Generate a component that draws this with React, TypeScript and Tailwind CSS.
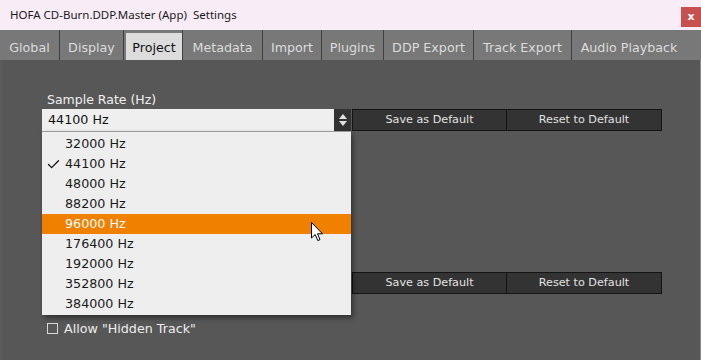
import { Check } from "lucide-react";

const TABS = [
  { label: "Global", w: "w-[60px]" },
  { label: "Display", w: "w-[64px]" },
  { label: "Project", w: "w-[59px]", active: true },
  { label: "Metadata", w: "w-[80px]" },
  { label: "Import", w: "w-[59px]" },
  { label: "Plugins", w: "w-[62px]" },
  { label: "DDP Export", w: "w-[90px]" },
  { label: "Track Export", w: "w-[98px]" },
  { label: "Audio Playback", w: "w-[114px]", last: true },
];

const RATES = ["32000", "44100", "48000", "88200", "96000", "176400", "192000", "352800", "384000"];

function ButtonPair() {
  return (
    <div className="flex ml-[1px]">
      <button className="w-[155px] h-[22px] bg-[#333333] border border-[#141414] text-[#e2e2e2] text-[11.2px] leading-none">
        Save as Default
      </button>
      <button className="w-[155px] h-[22px] bg-[#333333] border border-l-0 border-[#141414] text-[#e2e2e2] text-[11.2px] leading-none">
        Reset to Default
      </button>
    </div>
  );
}

export default function App() {
  return (
    <div
      className="w-[701px] h-[360px] flex flex-col overflow-hidden select-none"
      style={{ fontFamily: '"DejaVu Sans", Verdana, sans-serif' }}
    >
      {/* title bar */}
      <div className="h-[30px] shrink-0 bg-[#f8ecf7] flex items-start justify-between">
        <span
          className="pl-[10px] pt-[6px] text-[11.5px] text-[#1a1a1a]"
          style={{ fontFamily: '"Noto Sans", "Open Sans", sans-serif' }}
        >
          HOFA CD-Burn.DDP.Master (App)&nbsp;&nbsp;Settings
        </span>
        <div className="mt-[7px] w-[20px] h-[20px] bg-[#c84f4f] flex items-center justify-center text-white text-[11px] font-bold leading-none pb-[2px]">
          x
        </div>
      </div>

      {/* tabs */}
      <div className="h-[30px] shrink-0 bg-[#787878] flex">
        {TABS.map((t) => (
          <div
            key={t.label}
            className={`${t.w} h-full flex ${t.last ? "" : "border-r border-[#3f3f3f]"}`}
          >
            <div
              className={`flex-1 mt-[3px] pt-[2px] flex items-center justify-center text-[12.7px] ${
                t.active ? "bg-[#dcdcdc] text-[#141414] ml-[2px]" : "text-[#dcdcdc]"
              }`}
            >
              {t.label}
            </div>
          </div>
        ))}
      </div>

      {/* content */}
      <div className="flex-1 relative bg-[#575757] border-l-2 border-[#5c5c5c] border-r border-r-[#8c8c8c]">
        <div className="pl-[40px] pt-[32px] flex flex-col">
          <div className="pl-[5px] h-[17px] text-[12.5px] text-[#f0f0f0] leading-[15px]">Sample Rate (Hz)</div>
          <div className="flex">
            <div className="w-[309px] h-[22px] bg-[#efefef] flex items-center">
              <span className="flex-1 pl-[6px] text-[12.7px] text-[#111]">44100 Hz</span>
              <div className="w-[17px] h-full bg-[#323232] flex flex-col items-center justify-center gap-[2px]">
                <svg width="8" height="5" viewBox="0 0 8 5">
                  <path d="M4 0 L8 5 L0 5 Z" fill="#e0e0e0" />
                </svg>
                <svg width="8" height="5" viewBox="0 0 8 5">
                  <path d="M0 0 L8 0 L4 5 Z" fill="#e0e0e0" />
                </svg>
              </div>
            </div>
            <ButtonPair />
          </div>

          <div className="flex mt-[141px]">
            <div className="w-[309px] h-[22px]" />
            <ButtonPair />
          </div>

          <div className="flex items-center mt-[27px] pl-[5px] gap-[6px]">
            <div className="w-[11px] h-[11px] border border-[#d8d8d8]" />
            <span className="text-[12.7px] text-[#eeeeee] leading-[15px]">Allow "Hidden Track"</span>
          </div>
        </div>

        {/* open dropdown */}
        <div className="absolute left-[40px] top-[71px] w-[309px] h-[184px] bg-[#eeeeee] border-t border-[#9a9a9a] pt-[2px] shadow-[2px_3px_5px_rgba(0,0,0,0.45)]">
          {RATES.map((r) => (
            <div
              key={r}
              className={`h-[20px] flex items-center pl-[23px] relative text-[12.7px] ${
                r === "96000" ? "bg-[#f08000] text-white" : "text-[#1a1a1a]"
              }`}
            >
              {r === "44100" && (
                <Check size={15} strokeWidth={2} className="absolute left-[4px] top-[3px] text-[#111]" />
              )}
              {r} Hz
            </div>
          ))}
        </div>

        {/* mouse cursor */}
        <svg className="absolute left-[309px] top-[162px]" width="13" height="20" viewBox="0 0 13 20">
          <path
            d="M0.5 0.5 L0.5 16 L4.2 12.6 L6.8 18.6 L9 17.6 L6.5 11.8 L11.5 11.8 Z"
            fill="#ffffff"
            stroke="#000000"
            strokeWidth="1"
            strokeLinejoin="round"
          />
        </svg>
      </div>
    </div>
  );
}
